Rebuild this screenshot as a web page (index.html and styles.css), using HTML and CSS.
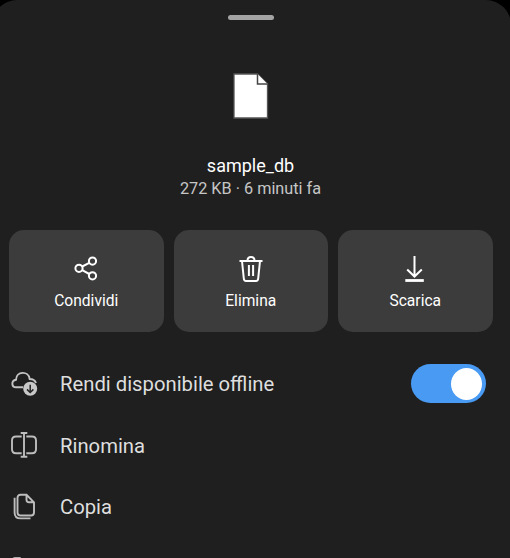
FILE: index.html
```html
<!DOCTYPE html>
<html lang="it">
<head>
<meta charset="utf-8">
<title>sample_db</title>
<link rel="stylesheet" href="styles.css">
</head>
<body>
<main class="sheet">
  <div class="handle"></div>
  <header class="file">
    <svg class="file-icon" width="36" height="46" viewBox="0 0 36 46"><path d="M1 1H24.500L34.500 11V45H1Z" fill="#fff" stroke="#555" stroke-width="1.300"/><path d="M24.500 1V11H34.500" fill="#fff" stroke="#444" stroke-width="1.500"/></svg>
    <h1 class="name">sample_db</h1>
    <p class="meta">272 KB · 6 minuti fa</p>
  </header>
  <div class="actions">
    <button class="action">
      <svg width="28" height="28" viewBox="0 0 28 28" fill="none" stroke="#fff" stroke-width="2"><circle cx="7" cy="14.300" r="3.600"/><circle cx="20.500" cy="7.100" r="3.600"/><circle cx="20.500" cy="21.800" r="3.600"/><path d="M10.200 12.500L17.300 8.800M10.200 16.200L17.300 20"/></svg>
      <span>Condividi</span>
    </button>
    <button class="action">
      <svg width="28" height="28" viewBox="0 0 28 28" fill="none" stroke="#fff" stroke-width="2"><path d="M2.500 7H25.500M10.500 6.500C10.500 1.800 17.500 1.800 17.500 6.500M5 7L6.800 24.500Q7 27 9 27H19Q21 27 21.200 24.500L23 7M11.900 11V22M16.100 11V22"/></svg>
      <span>Elimina</span>
    </button>
    <button class="action">
      <svg width="28" height="28" viewBox="0 0 28 28" fill="none" stroke="#fff" stroke-width="2"><path d="M13.500 2V22.500M6.200 15.500L13.500 22.500L20.800 15.500"/><path d="M4.300 26.500H22.800" stroke-width="2.800"/></svg>
      <span>Scarica</span>
    </button>
  </div>
  <ul class="menu">
    <li class="row">
      <svg width="28" height="28" viewBox="0 0 28 28" fill="none" stroke="#c4c4c4" stroke-width="1.900"><path d="M13 17.300H6C1.500 17.300 .8 10.600 6 9.700C6.300 1 18.500 .5 19.700 9C23 9 25 10.300 26 13"/><circle cx="20.200" cy="18.800" r="7" fill="#c8c8c8" stroke="none"/><path d="M20.200 14.800V22.300M17 19.400L20.200 22.500L23.400 19.400" stroke="#252525" stroke-width="1.500"/></svg>
      <span class="label">Rendi disponibile offline</span>
      <span class="toggle"><span class="knob"></span></span>
    </li>
    <li class="row">
      <svg width="28" height="28" viewBox="0 0 28 28" fill="none" stroke="#bdbdbd" stroke-width="1.900"><path d="M11.700 5.500H6Q2 5.500 2 9.500V18.300Q2 22.300 6 22.300H11.700M16.300 5.500H22Q26 5.500 26 9.500V18.300Q26 22.300 22 22.300H16.300M14 2V25.800M10.700 2H17.300M10.700 25.800H17.300"/></svg>
      <span class="label">Rinomina</span>
    </li>
    <li class="row">
      <svg width="28" height="28" viewBox="0 0 28 28" fill="none" stroke="#bdbdbd" stroke-width="1.900"><path d="M10.500 1.800H16.500L24 9.300V19.500Q24 22.500 21 22.500H10.500Q7.500 22.500 7.500 19.500V4.800Q7.500 1.800 10.500 1.800M16.500 2V6.800Q16.500 9.300 19 9.300H24M4.600 4.700V19.500Q4.600 25.400 10.500 25.400H20.500"/></svg>
      <span class="label">Copia</span>
    </li>
    <li class="row">
      <svg width="28" height="28" viewBox="0 0 28 28" fill="none" stroke="#aaa" stroke-width="1.500"><path d="M3 25V6Q3 3.800 5 3.800H10L13 7H25V25Z"/></svg>
    </li>
  </ul>
</main>
</body>
</html>
```
FILE: styles.css
```css
* { box-sizing: border-box; }
body {
  margin: 0;
  height: 558px;
  overflow: hidden;
  background: #000;
  color: #fff;
  font-family: Roboto, "Liberation Sans", sans-serif;
}
.sheet {
  height: 558px;
  margin: 0 -1px 0 -8px;
  padding: 15px 19px 0 17px;
  border-radius: 25px 25px 0 0;
  background: #1f1f1f;
  overflow: hidden;
}
.handle {
  width: 46px;
  height: 5px;
  margin: 0 auto;
  border-radius: 3px;
  background: #a3a3a3;
}
.file {
  display: flex;
  flex-direction: column;
  align-items: center;
  padding-top: 53px;
}
.file-icon { display: block; }
.name {
  margin: 35px 0 0;
  font-size: 18px;
  font-weight: 400;
  line-height: 24px;
}
.meta {
  margin: 0;
  color: #c6c6c6;
  font-size: 16.250px;
  line-height: 22px;
}
.actions {
  display: grid;
  grid-template-columns: repeat(3, 154.500px);
  gap: 10px;
  margin-top: 30px;
}
.action {
  display: flex;
  flex-direction: column;
  align-items: center;
  height: 102px;
  padding: 24px 0 0;
  border: 0;
  border-radius: 15px;
  background: #3c3c3c;
  color: #fff;
  font: 15.600px/20px Roboto, sans-serif;
}
.action span { margin-top: 9px; }
.menu {
  margin: 21px 0 0;
  padding: 0;
  list-style: none;
}
.row {
  display: flex;
  align-items: center;
  height: 61.500px;
  padding-right: 6px;
}
.row svg {
  flex: none;
  margin-left: 1px;
}
.label {
  margin: 1px 0 0 22px;
  color: #dedede;
  font-size: 20.250px;
  line-height: 28px;
}
.toggle {
  display: flex;
  align-items: center;
  justify-content: flex-end;
  width: 75px;
  height: 39px;
  margin-left: auto;
  padding-right: 4px;
  border-radius: 20px;
  background: #489af3;
}
.knob {
  width: 31px;
  height: 32px;
  border-radius: 50%;
  background: #fff;
}
```
